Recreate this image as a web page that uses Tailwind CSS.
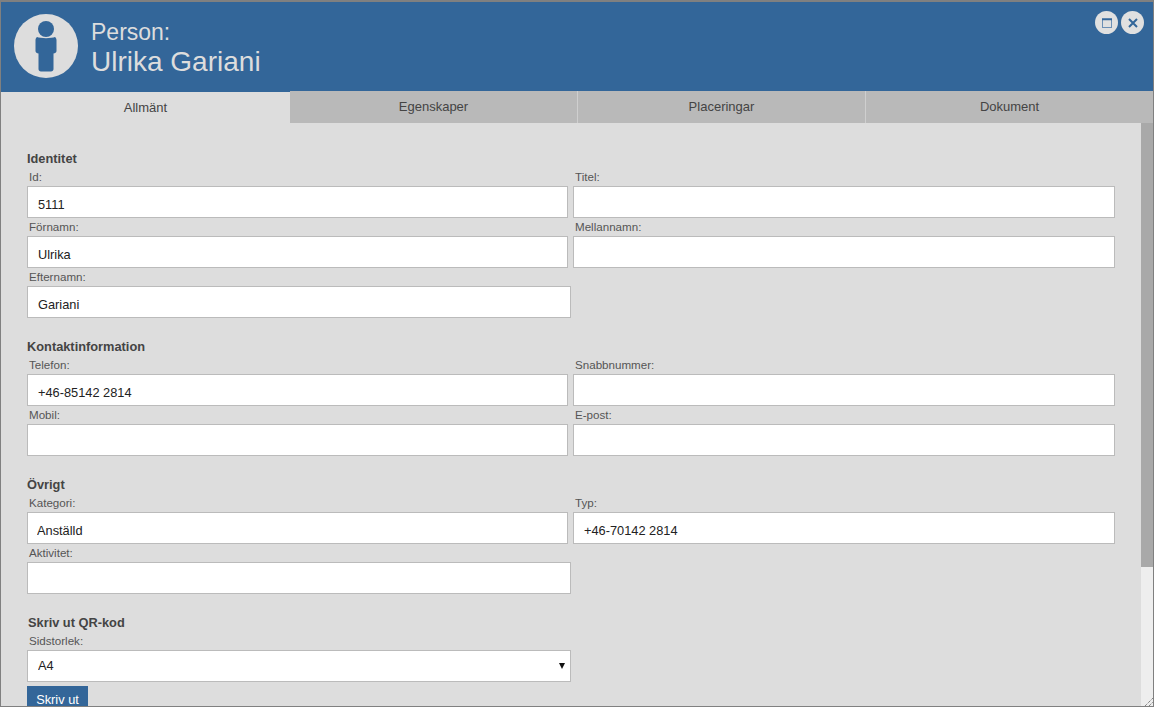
<!doctype html>
<html lang="sv">
  <head>
    <meta charset="UTF-8" />
    <title>Person: Ulrika Gariani</title>
    <script src="https://cdn.jsdelivr.net/npm/@tailwindcss/browser@4"></script>
  </head>
  <body class="h-[707px] w-[1154px] overflow-hidden bg-[#dddddd] font-['Liberation_Sans',Arial,sans-serif]">
    <div class="relative flex h-[707px] flex-col overflow-hidden border border-t-2 border-[#808080]">
      <!-- Header -->
      <header class="relative flex h-[90px] shrink-0 bg-[#336699] pl-[13px] pt-[12px]">
        <div class="flex size-[64px] items-center justify-center rounded-full bg-[#dddddd]">
          <svg class="size-[64px]" viewBox="0 0 64 64" fill="#336699">
            <circle cx="32" cy="15" r="8" />
            <path d="M23 23C26 24.500 38 24.500 41 23C41.700 23.500 42.500 24.500 42.500 26V37C42.500 38.500 41 39.500 39.500 39.500V55C39.500 56.500 38.500 57.500 37 57.500H27C25.500 57.500 24.500 56.500 24.500 55V39.500C23 39.500 21.500 38.500 21.500 37V26C21.500 24.500 22.300 23.500 23 23Z" />
          </svg>
        </div>
        <div class="ml-[13px] text-[#dddddd]">
          <div class="mt-[4px] text-[23px] leading-[28px]">Person:</div>
          <div class="text-[28px] leading-[32px]">Ulrika Gariani</div>
        </div>
        <div class="absolute right-[9px] top-[9px] flex gap-[3px]">
          <button class="flex size-[23px] items-center justify-center rounded-full bg-[#e0e0e0]">
            <svg class="size-[10px]" viewBox="0 0 10 10" fill="none" stroke="#6b8fb5">
              <rect x="0.500" y="0.500" width="9" height="9" />
              <path d="M0 1.500h10" stroke="#336699" stroke-width="1.500" />
            </svg>
          </button>
          <button class="flex size-[23px] items-center justify-center rounded-full bg-[#e0e0e0]">
            <svg class="size-[10px]" viewBox="0 0 10 10" fill="none" stroke="#336699" stroke-width="2">
              <path d="M1 1l8 8M9 1l-8 8" />
            </svg>
          </button>
        </div>
      </header>

      <!-- Flikar -->
      <nav class="-mt-px flex h-[32px] shrink-0 text-[13px] text-[#444]">
        <div class="z-10 mt-px flex w-[289px] items-center justify-center bg-[#dddddd]">Allmänt</div>
        <div class="z-10 flex w-[287px] items-center justify-center bg-[#b9b9b9]">Egenskaper</div>
        <div class="z-10 flex w-[288px] items-center justify-center border-l border-[#cfcfcf] bg-[#b9b9b9]">Placeringar</div>
        <div class="z-10 flex flex-1 items-center justify-center border-l border-[#cfcfcf] bg-[#b9b9b9]">Dokument</div>
      </nav>

      <div class="flex min-h-0 flex-1">
        <main class="min-w-0 flex-1 overflow-hidden pl-[26px] pt-[27px]">
          <section>
            <h2 class="h-[18px] text-[12.8px] leading-[17px] font-bold text-[#444]">Identitet</h2>
            <div class="grid grid-cols-[541px_542px] gap-x-[5px]">
              <label class="block text-[11.6px] leading-[18px] text-[#555]"><span class="block h-[18px] pl-[2px]">Id:</span><input value="5111" class="block h-[32px] w-full border border-[#bbb] bg-white px-[10px] pt-[4px] text-[12.8px] text-[#222]" /></label>
              <label class="block text-[11.6px] leading-[18px] text-[#555]"><span class="block h-[18px] pl-[2px]">Titel:</span><input class="block h-[32px] w-full border border-[#bbb] bg-white px-[10px] pt-[4px] text-[12.8px] text-[#222]" /></label>
              <label class="block text-[11.6px] leading-[18px] text-[#555]"><span class="block h-[18px] pl-[2px]">Förnamn:</span><input value="Ulrika" class="block h-[32px] w-full border border-[#bbb] bg-white px-[10px] pt-[4px] text-[12.8px] text-[#222]" /></label>
              <label class="block text-[11.6px] leading-[18px] text-[#555]"><span class="block h-[18px] pl-[2px]">Mellannamn:</span><input class="block h-[32px] w-full border border-[#bbb] bg-white px-[10px] pt-[4px] text-[12.8px] text-[#222]" /></label>
            </div>
            <label class="block w-[544px] text-[11.6px] leading-[18px] text-[#555]"><span class="block h-[18px] pl-[2px]">Efternamn:</span><input value="Gariani" class="block h-[32px] w-full border border-[#bbb] bg-white px-[10px] pt-[4px] text-[12.8px] text-[#222]" /></label>
          </section>

          <section class="mt-[20px]">
            <h2 class="h-[18px] text-[12.8px] leading-[17px] font-bold text-[#444]">Kontaktinformation</h2>
            <div class="grid grid-cols-[541px_542px] gap-x-[5px]">
              <label class="block text-[11.6px] leading-[18px] text-[#555]"><span class="block h-[18px] pl-[2px]">Telefon:</span><input value="+46-85142 2814" class="block h-[32px] w-full border border-[#bbb] bg-white px-[10px] pt-[5px] text-[12.8px] text-[#222]" /></label>
              <label class="block text-[11.6px] leading-[18px] text-[#555]"><span class="block h-[18px] pl-[2px]">Snabbnummer:</span><input class="block h-[32px] w-full border border-[#bbb] bg-white px-[10px] pt-[5px] text-[12.8px] text-[#222]" /></label>
              <label class="block text-[11.6px] leading-[18px] text-[#555]"><span class="block h-[18px] pl-[2px]">Mobil:</span><input class="block h-[32px] w-full border border-[#bbb] bg-white px-[10px] pt-[5px] text-[12.8px] text-[#222]" /></label>
              <label class="block text-[11.6px] leading-[18px] text-[#555]"><span class="block h-[18px] pl-[2px]">E-post:</span><input class="block h-[32px] w-full border border-[#bbb] bg-white px-[10px] pt-[5px] text-[12.8px] text-[#222]" /></label>
            </div>
          </section>

          <section class="mt-[20px]">
            <h2 class="h-[18px] text-[12.8px] leading-[17px] font-bold text-[#444]">Övrigt</h2>
            <div class="grid grid-cols-[541px_542px] gap-x-[5px]">
              <label class="block text-[11.6px] leading-[18px] text-[#555]"><span class="block h-[18px] pl-[2px]">Kategori:</span><input value="Anställd" class="block h-[32px] w-full border border-[#bbb] bg-white pl-[9px] pr-[10px] pt-[5px] text-[12.8px] text-[#222]" /></label>
              <label class="block text-[11.6px] leading-[18px] text-[#555]"><span class="block h-[18px] pl-[2px]">Typ:</span><input value="+46-70142 2814" class="block h-[32px] w-full border border-[#bbb] bg-white px-[10px] pt-[5px] text-[12.8px] text-[#222]" /></label>
            </div>
            <label class="block w-[544px] text-[11.6px] leading-[18px] text-[#555]"><span class="block h-[18px] pl-[2px]">Aktivitet:</span><input class="block h-[32px] w-full border border-[#bbb] bg-white px-[10px] pt-[5px] text-[12.8px] text-[#222]" /></label>
          </section>

          <section class="mt-[20px]">
            <h2 class="h-[18px] pl-px text-[12.8px] leading-[17px] font-bold text-[#444]">Skriv ut QR-kod</h2>
            <label class="block w-[544px] text-[11.6px] leading-[18px] text-[#555]">
              <span class="block h-[18px] pl-[2px]">Sidstorlek:</span>
              <span class="relative block">
                <select class="block h-[32px] w-full appearance-none border border-[#bbb] bg-white px-[10px] text-[12.8px] text-[#222]"><option>A4</option></select>
                <svg class="absolute right-[6px] top-[13px] size-[6px]" viewBox="0 0 6 6" fill="#111"><path d="M0 0h6L3 6z" /></svg>
              </span>
            </label>
            <button class="mt-[4px] flex h-[28px] w-[61px] justify-center bg-[#336699] pt-[4px] text-[12.8px] text-white">Skriv ut</button>
          </section>
        </main>

        <!-- Scrollbar -->
        <div class="w-[12px] shrink-0 bg-[#eeeeee]">
          <div class="h-[444px] bg-[#a9a9a9]"></div>
        </div>
      </div>

      <svg class="absolute bottom-0 right-0 size-[9px]" viewBox="0 0 9 9" stroke="#555" fill="none" stroke-dasharray="1 1">
        <path d="M1 9L9 1M5 9l4-4" />
      </svg>
    </div>
  </body>
</html>
